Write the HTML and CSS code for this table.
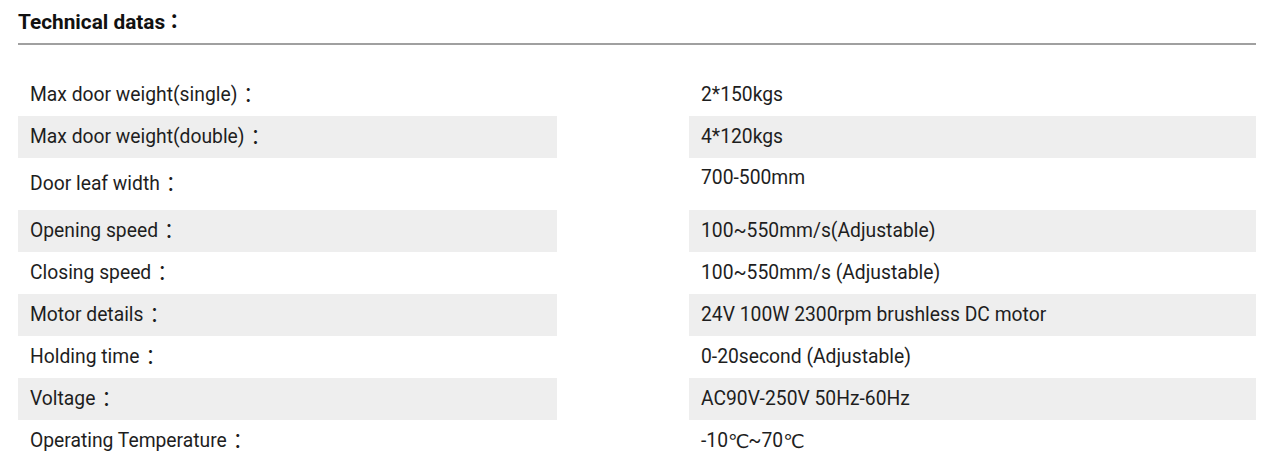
FILE: index.html
```html
<!DOCTYPE html>
<html>
<head>
<meta charset="utf-8">
<link rel="stylesheet" href="styles.css">
</head>
<body>
<div class="page">
  <h2 class="title">Technical datas<span class="colon">：</span></h2>
  <div class="specs">
    <div class="row">
      <div class="cell key">Max door weight(single)<span class="colon">：</span></div>
      <div class="cell val">2*150kgs</div>
    </div>
    <div class="row alt">
      <div class="cell key">Max door weight(double)<span class="colon">：</span></div>
      <div class="cell val">4*120kgs</div>
    </div>
    <div class="row tall">
      <div class="cell key">Door leaf width<span class="colon">：</span></div>
      <div class="cell val top">700-500mm</div>
    </div>
    <div class="row alt">
      <div class="cell key">Opening speed<span class="colon">：</span></div>
      <div class="cell val">100~550mm/s(Adjustable)</div>
    </div>
    <div class="row">
      <div class="cell key">Closing speed<span class="colon">：</span></div>
      <div class="cell val">100~550mm/s (Adjustable)</div>
    </div>
    <div class="row alt">
      <div class="cell key">Motor details<span class="colon">：</span></div>
      <div class="cell val">24V 100W 2300rpm brushless DC motor</div>
    </div>
    <div class="row">
      <div class="cell key">Holding time<span class="colon">：</span></div>
      <div class="cell val">0-20second (Adjustable)</div>
    </div>
    <div class="row alt">
      <div class="cell key">Voltage<span class="colon">：</span></div>
      <div class="cell val">AC90V-250V 50Hz-60Hz</div>
    </div>
    <div class="row">
      <div class="cell key">Operating Temperature<span class="colon">：</span></div>
      <div class="cell val">-10<span class="deg">℃</span>~70<span class="deg">℃</span></div>
    </div>
  </div>
</div>
</body>
</html>
```
FILE: styles.css
```css
html, body {
  margin: 0;
  padding: 0;
  background: #fff;
}
body {
  font-family: Roboto, "Noto Sans", "Noto Sans CJK JP", sans-serif;
  color: #1e1e1e;
}
.page {
  padding: 0 16px 0 18px;
}
.title {
  margin: 0;
  padding: 7px 0 7px;
  font-size: 20.8px;
  font-weight: 700;
  line-height: 28px;
  color: #111;
  border-bottom: 2px solid #a0a0a0;
}
.title .colon {
  font-family: "Noto Sans CJK JP", sans-serif;
  font-size: 20px;
  font-weight: 700;
  margin-left: -1px;
}
.specs {
  margin-top: 29px;
  display: flex;
  flex-direction: column;
}
.row {
  display: grid;
  grid-template-columns: 539px 567px;
  column-gap: 132px;
  height: 42px;
}
.row.tall {
  height: 52px;
}
.cell {
  display: flex;
  align-items: center;
  padding: 0 12px;
  font-size: 19.3px;
  line-height: 26px;
  white-space: nowrap;
}
.alt .cell {
  background: #eeeeee;
}
.cell .colon {
  font-family: "Noto Sans CJK JP", sans-serif;
  font-size: 20px;
  margin-left: 1px;
}
.deg {
  font-family: "DejaVu Sans", "Noto Sans CJK JP", sans-serif;
  font-size: 19px;
  letter-spacing: -1px;
}
.top {
  align-self: start;
  height: 42px;
  margin-top: -1px;
}
```
